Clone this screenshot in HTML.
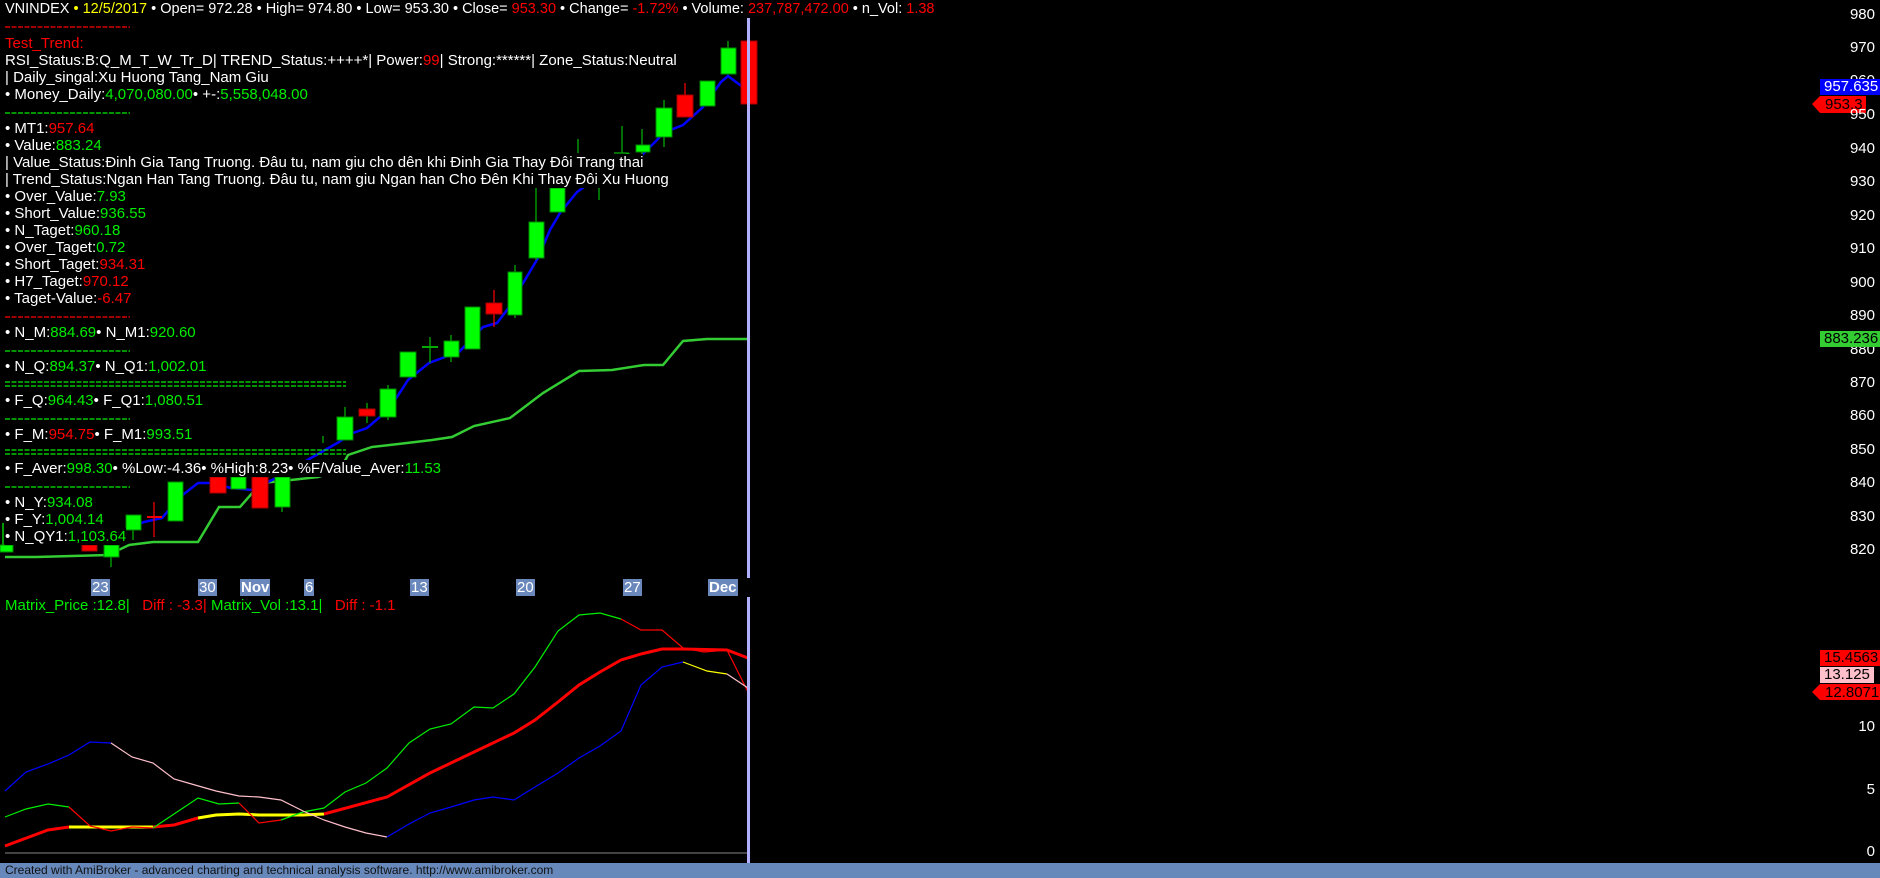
<!DOCTYPE html>
<html><head><meta charset="utf-8">
<style>
html,body{margin:0;padding:0;background:#000;}
body{width:1880px;height:878px;position:relative;overflow:hidden;font-family:"Liberation Sans",Arial,sans-serif;}
.t{position:absolute;left:5px;font-size:15px;line-height:17px;color:#fff;white-space:nowrap;background:#000;}
.g{color:#00ee00}.r{color:#ff0000}.y{color:#ffff00}
.ax{position:absolute;right:5px;font-size:15px;line-height:17px;color:#fff;text-align:right;}
.dl{position:absolute;top:579px;height:17px;background:#6b88bd;color:#fff;font-size:15px;line-height:17px;padding:0 1px;}
.tag{position:absolute;font-size:15px;line-height:16px;height:16px;padding-left:4px;}
</style></head><body>
<svg width="1880" height="878" style="position:absolute;left:0;top:0">
<polyline fill="none" stroke="#33cc33" stroke-width="2.5" points="5,557 36,557 108,555 129,545 153,542 198,542 219,507 240,507 261,483 282,481 318,477 340,470 348,455 372,447 407,443 432,440 452,437 474,426 510,418 543,393 579,371 612,370 644,365 663,365 683,341 707,339 748,339"/>
<polyline fill="none" stroke="#0000ff" stroke-width="2.5" points="123,530 144,522 162,518 180,497 198,483 210,483 231,488 252,490 276,478 290,470 339,442 353,433 367,428 380,417 395,400 408,380 429,363 445,357 459,352 483,327 497,323 507,310 538,258 550,230 560,213 577,192 587,185 600,178 629,162 642,155 657,140 663,133 683,125 703,107 721,82 728,76 740,85 748,90"/>
<g stroke-width="1.3">
<line x1="3" y1="523" x2="3" y2="552" stroke="#00ee00"/>
<line x1="111" y1="540" x2="111" y2="567" stroke="#00aa00"/>
<line x1="133" y1="530" x2="133" y2="540" stroke="#00aa00"/>
<line x1="154" y1="502" x2="154" y2="537" stroke="#ee0000"/>
<line x1="282" y1="470" x2="282" y2="512" stroke="#00aa00"/>
<line x1="323" y1="436" x2="323" y2="443" stroke="#00aa00"/>
<line x1="345" y1="407" x2="345" y2="440" stroke="#00aa00"/>
<line x1="367" y1="403" x2="367" y2="423" stroke="#00aa00"/>
<line x1="388" y1="385" x2="388" y2="420" stroke="#00aa00"/>
<line x1="430" y1="337" x2="430" y2="363" stroke="#00aa00"/>
<line x1="451" y1="335" x2="451" y2="362" stroke="#00aa00"/>
<line x1="494" y1="290" x2="494" y2="327" stroke="#ee0000"/>
<line x1="515" y1="265" x2="515" y2="318" stroke="#00aa00"/>
<line x1="536" y1="188" x2="536" y2="260" stroke="#00aa00"/>
<line x1="578" y1="139" x2="578" y2="153" stroke="#00aa00"/>
<line x1="599" y1="187" x2="599" y2="200" stroke="#00aa00"/>
<line x1="622" y1="126" x2="622" y2="153" stroke="#00aa00"/>
<line x1="614" y1="153" x2="627" y2="153" stroke="#00aa00"/>
<line x1="642" y1="129" x2="642" y2="169" stroke="#00aa00"/>
<line x1="664" y1="100" x2="664" y2="147" stroke="#00aa00"/>
<line x1="685" y1="83" x2="685" y2="117" stroke="#ee0000"/>
<line x1="728" y1="41" x2="728" y2="74" stroke="#00aa00"/>
<line x1="749" y1="33" x2="749" y2="104" stroke="#ee0000"/>
<line x1="147" y1="517" x2="162" y2="517" stroke="#ee0000" stroke-width="2"/>
<line x1="422" y1="347" x2="438" y2="347" stroke="#00aa00" stroke-width="2"/>
</g>
<g stroke="#008800" stroke-width="1">
<rect x="0" y="545" width="13" height="7" fill="#00ff00"/>
<rect x="104" y="545" width="15" height="12" fill="#00ff00"/>
<rect x="126" y="515" width="15" height="15" fill="#00ff00"/>
<rect x="168" y="482" width="15" height="39" fill="#00ff00"/>
<rect x="231" y="477" width="15" height="12" fill="#00ff00"/>
<rect x="275" y="477" width="15" height="30" fill="#00ff00"/>
<rect x="337" y="417" width="16" height="23" fill="#00ff00"/>
<rect x="380" y="389" width="16" height="28" fill="#00ff00"/>
<rect x="400" y="352" width="16" height="25" fill="#00ff00"/>
<rect x="444" y="341" width="15" height="16" fill="#00ff00"/>
<rect x="465" y="307" width="15" height="42" fill="#00ff00"/>
<rect x="508" y="272" width="14" height="43" fill="#00ff00"/>
<rect x="529" y="222" width="15" height="36" fill="#00ff00"/>
<rect x="550" y="188" width="15" height="24" fill="#00ff00"/>
<rect x="626" y="153" width="3" height="18" fill="#00ff00"/>
<rect x="636" y="145" width="14" height="7" fill="#00ff00"/>
<rect x="656" y="108" width="16" height="29" fill="#00ff00"/>
<rect x="700" y="81" width="15" height="25" fill="#00ff00"/>
<rect x="721" y="48" width="15" height="26" fill="#00ff00"/>
</g>
<g stroke="#aa0000" stroke-width="1">
<rect x="82" y="545" width="15" height="6" fill="#ff0000"/>
<rect x="210" y="477" width="16" height="16" fill="#ff0000"/>
<rect x="252" y="477" width="16" height="31" fill="#ff0000"/>
<rect x="359" y="409" width="16" height="7" fill="#ff0000"/>
<rect x="486" y="303" width="16" height="11" fill="#ff0000"/>
<rect x="677" y="95" width="16" height="22" fill="#ff0000"/>
<rect x="741" y="41" width="16" height="63" fill="#ff0000"/>
</g>
<line x1="5" y1="853" x2="747" y2="853" stroke="#888" stroke-width="1"/>
<polyline fill="none" stroke="#ff0000" stroke-width="3" points="5,846 48,830 69,827"/>
<polyline fill="none" stroke="#ffff00" stroke-width="3" points="69,827 153,827"/>
<polyline fill="none" stroke="#ff0000" stroke-width="3" points="153,827 174,825 198,818"/>
<polyline fill="none" stroke="#ffff00" stroke-width="3" points="198,818 216,815 239,814 259,815 303,815 324,814"/>
<polyline fill="none" stroke="#ff0000" stroke-width="3" points="324,814 387,797 430,773 474,752 514,733 535,720 558,702 579,685 600,672 621,660 641,654 662,649 683,649 727,650 748,658"/>
<g fill="none" stroke-width="1.2">
<polyline stroke="#00ee00" points="5,817 26,809 48,804 69,807"/>
<polyline stroke="#ff0000" points="69,807 90,826 111,831 132,827 153,828"/>
<polyline stroke="#00ee00" points="153,828 174,814 198,798 219,804 239,803"/>
<polyline stroke="#ff0000" points="239,803 259,823 281,820"/>
<polyline stroke="#00ee00" points="281,820 303,812 324,808 345,792 366,783 387,768 409,743 430,729 451,724 474,707 493,708 514,694 535,667 558,631 579,615 600,613 621,619"/>
<polyline stroke="#ff0000" points="621,619 641,630 662,630 683,648 704,652 727,650 748,692"/>
<polyline stroke="#0000ff" points="5,791 26,772 48,764 69,755 90,742 111,743"/>
<polyline stroke="#ffc0cb" points="111,743 132,757 153,763 174,779 195,785 216,791 239,796 259,797 281,800 303,811 324,820 345,827 366,833 387,837"/>
<polyline stroke="#0000ff" points="387,837 409,824 430,813 451,807 474,800 493,797 514,800 535,787 558,773 579,758 600,746 621,731 641,685 662,667 683,662"/>
<polyline stroke="#ffff00" points="683,662 707,671 727,674"/>
<polyline stroke="#ffc0cb" points="727,674 748,688"/>
</g>
<rect x="747" y="18" width="3" height="560" fill="#b0b0ff"/>
<rect x="747" y="597" width="3" height="266" fill="#b0b0ff"/>
<g stroke-dasharray="5,1.5" stroke-width="1.3">
<line x1="5" y1="27" x2="130" y2="27" stroke="#ff0000"/>
<line x1="5" y1="113" x2="130" y2="113" stroke="#00ee00"/>
<line x1="5" y1="317" x2="130" y2="317" stroke="#ff0000"/>
<line x1="5" y1="351" x2="130" y2="351" stroke="#00ee00"/>
<line x1="5" y1="419" x2="130" y2="419" stroke="#00ee00"/>
<line x1="5" y1="487" x2="130" y2="487" stroke="#00ee00"/>
<line x1="5" y1="382" x2="346" y2="382" stroke="#00ee00"/>
<line x1="5" y1="386" x2="346" y2="386" stroke="#00ee00"/>
<line x1="5" y1="450" x2="346" y2="450" stroke="#00ee00"/>
<line x1="5" y1="454" x2="346" y2="454" stroke="#00ee00"/>
</g>
<polygon points="1812,104 1820,96 1866,96 1866,113 1820,113" fill="#ff0000"/>
<polygon points="1812,692 1820,684 1880,684 1880,700 1820,700" fill="#ff0000"/>
</svg>

<div class="t" style="top:1px;font-size:14.5px">VNINDEX <span class="y">• 12/5/2017</span> • Open= 972.28 • High= 974.80 • Low= 953.30 • Close= <span class="r">953.30</span> • Change= <span class="r">-1.72%</span> • Volume: <span class="r">237,787,472.00</span> • n_Vol: <span class="r">1.38</span></div>
<div class="t r" style="top:35px">Test_Trend:</div>
<div class="t" style="top:52px">RSI_Status:B:Q_M_T_W_Tr_D| TREND_Status:++++*| Power:<span class="r">99</span>| Strong:******| Zone_Status:Neutral</div>
<div class="t" style="top:69px">| Daily_singal:Xu Huong Tang_Nam Giu</div>
<div class="t" style="top:86px">• Money_Daily:<span class="g">4,070,080.00</span>• +-:<span class="g">5,558,048.00</span></div>
<div class="t" style="top:120px">• MT1:<span class="r">957.64</span></div>
<div class="t" style="top:137px">• Value:<span class="g">883.24</span></div>
<div class="t" style="top:154px">| Value_Status:Đinh Gia Tang Truong. Đâu tu, nam giu cho dên khi Đinh Gia Thay Đôi Trang thai</div>
<div class="t" style="top:171px">| Trend_Status:Ngan Han Tang Truong. Đâu tu, nam giu Ngan han Cho Đên Khi Thay Đôi Xu Huong</div>
<div class="t" style="top:188px">• Over_Value:<span class="g">7.93</span></div>
<div class="t" style="top:205px">• Short_Value:<span class="g">936.55</span></div>
<div class="t" style="top:222px">• N_Taget:<span class="g">960.18</span></div>
<div class="t" style="top:239px">• Over_Taget:<span class="g">0.72</span></div>
<div class="t" style="top:256px">• Short_Taget:<span class="r">934.31</span></div>
<div class="t" style="top:273px">• H7_Taget:<span class="r">970.12</span></div>
<div class="t" style="top:290px">• Taget-Value:<span class="r">-6.47</span></div>
<div class="t" style="top:324px">• N_M:<span class="g">884.69</span>• N_M1:<span class="g">920.60</span></div>
<div class="t" style="top:358px">• N_Q:<span class="g">894.37</span>• N_Q1:<span class="g">1,002.01</span></div>
<div class="t" style="top:392px">• F_Q:<span class="g">964.43</span>• F_Q1:<span class="g">1,080.51</span></div>
<div class="t" style="top:426px">• F_M:<span class="r">954.75</span>• F_M1:<span class="g">993.51</span></div>
<div class="t" style="top:460px">• F_Aver:<span class="g">998.30</span>• %Low:-4.36• %High:8.23• %F/Value_Aver:<span class="g">11.53</span></div>
<div class="t" style="top:494px">• N_Y:<span class="g">934.08</span></div>
<div class="t" style="top:511px">• F_Y:<span class="g">1,004.14</span></div>
<div class="t" style="top:528px">• N_QY1:<span class="g">1,103.64</span></div>

<div class="t" style="top:597px"><span class="g">Matrix_Price :12.8|</span>&nbsp;&nbsp;&nbsp;<span class="r">Diff : -3.3|</span> <span class="g">Matrix_Vol :13.1|</span>&nbsp;&nbsp;&nbsp;<span class="r">Diff : -1.1</span></div>

<div class="dl" style="left:91px">23</div>
<div class="dl" style="left:198px">30</div>
<div class="dl" style="left:240px;font-weight:bold">Nov</div>
<div class="dl" style="left:304px">6</div>
<div class="dl" style="left:410px">13</div>
<div class="dl" style="left:516px">20</div>
<div class="dl" style="left:623px">27</div>
<div class="dl" style="left:708px;font-weight:bold">Dec</div>

<div class="ax" style="top:6px">980</div>
<div class="ax" style="top:39px">970</div>
<div class="ax" style="top:72px">960</div>
<div class="ax" style="top:106px">950</div>
<div class="ax" style="top:140px">940</div>
<div class="ax" style="top:173px">930</div>
<div class="ax" style="top:207px">920</div>
<div class="ax" style="top:240px">910</div>
<div class="ax" style="top:274px">900</div>
<div class="ax" style="top:307px">890</div>
<div class="ax" style="top:341px">880</div>
<div class="ax" style="top:374px">870</div>
<div class="ax" style="top:407px">860</div>
<div class="ax" style="top:441px">850</div>
<div class="ax" style="top:474px">840</div>
<div class="ax" style="top:508px">830</div>
<div class="ax" style="top:541px">820</div>
<div class="ax" style="top:718px">10</div>
<div class="ax" style="top:781px">5</div>
<div class="ax" style="top:843px">0</div>

<div class="tag" style="left:1820px;top:79px;width:56px;background:#0000ff;color:#fff">957.635</div>
<div class="tag" style="left:1821px;top:97px;color:#000">953.3</div>
<div class="tag" style="left:1820px;top:331px;width:56px;background:#33cc33;color:#000">883.236</div>
<div class="tag" style="left:1820px;top:650px;width:56px;background:#ff0000;color:#000">15.4563</div>
<div class="tag" style="left:1820px;top:667px;width:50px;background:#ffc0cb;color:#000">13.125</div>
<div class="tag" style="left:1821px;top:685px;color:#000">12.8071</div>

<div style="position:absolute;left:0;top:863px;width:1880px;height:15px;background:#6688bb;color:#111;font-size:12px;line-height:15px;padding-left:5px;white-space:nowrap">Created with AmiBroker - advanced charting and technical analysis software. http://www.amibroker.com</div>
</body></html>
